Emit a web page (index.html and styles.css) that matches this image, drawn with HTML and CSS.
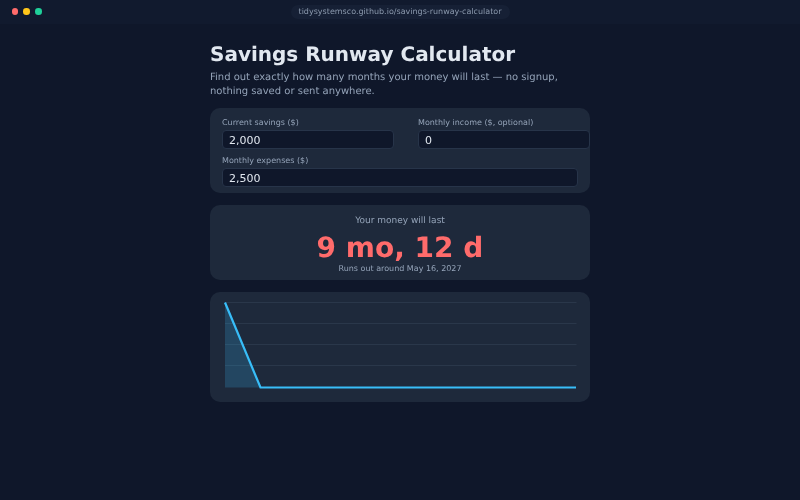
FILE: index.html
```html
<!DOCTYPE html>
<html lang="en">
<head>
<meta charset="utf-8">
<title>Savings Runway Calculator</title>
<link rel="stylesheet" href="styles.css">
</head>
<body>
<header class="chrome">
  <div class="lights"><span class="dot red"></span><span class="dot yellow"></span><span class="dot green"></span></div>
  <div class="url">tidysystemsco.github.io/savings-runway-calculator</div>
</header>
<main class="page">
  <h1 class="title">Savings Runway Calculator</h1>
  <p class="lead">Find out exactly how many months your money will last — no signup, nothing saved or sent anywhere.</p>
  <section class="card form">
    <div class="pair">
      <label class="field"><span class="label">Current savings ($)</span><input class="input" value="2,000"></label>
      <label class="field"><span class="label">Monthly income ($, optional)</span><input class="input" value="0"></label>
    </div>
    <label class="field"><span class="label">Monthly expenses ($)</span><input class="input" value="2,500"></label>
  </section>
  <section class="card result">
    <div class="result-label">Your money will last</div>
    <div class="result-value">9 mo, 12 d</div>
    <div class="result-date">Runs out around May 16, 2027</div>
  </section>
  <section class="card chart">
    <svg class="chart-svg" width="356" height="90" viewBox="0 0 356 90">
      <g class="grid-lines">
        <line x1="3" y1="2.5" x2="354.5" y2="2.5"/>
        <line x1="3" y1="23.5" x2="354.5" y2="23.5"/>
        <line x1="3" y1="44.5" x2="354.5" y2="44.5"/>
        <line x1="3" y1="65.5" x2="354.5" y2="65.5"/>
      </g>
      <polygon class="area" points="3,2.5 38.5,87.5 3,87.5"/>
      <polyline class="line" points="3,2.5 38.5,87.5 354,87.5"/>
    </svg>
  </section>
</main>
</body>
</html>
```
FILE: styles.css
```css
* { box-sizing: border-box; }
html, body { margin: 0; height: 100%; }
body {
  background: #0f172a;
  color: #e2e8f0;
  font-family: "DejaVu Sans", sans-serif;
  text-rendering: geometricPrecision;
  overflow: hidden;
}
.chrome {
  height: 24px;
  background: #111a2e;
  display: flex;
  align-items: center;
  justify-content: center;
  position: relative;
  filter: blur(0.3px);
}
.lights {
  position: absolute;
  left: 11.5px;
  top: 8px;
  display: flex;
  gap: 5.25px;
}
.dot { width: 6.5px; height: 6.5px; border-radius: 50%; }
.red { background: #ff6b6b; }
.yellow { background: #ffc61a; }
.green { background: #1fd09a; }
.url {
  font-size: 8px;
  line-height: 14px;
  height: 14px;
  padding: 0 8px;
  border-radius: 7px;
  background: #162035;
  color: #8b99ad;
}
.page {
  width: 380px;
  margin: 0 auto;
  padding-top: 18px;
  filter: blur(0.3px);
}
.title {
  margin: 0;
  font-size: 20px;
  line-height: 24px;
  font-weight: 700;
  color: #e2e8f0;
}
.lead {
  margin: 5px 0 0;
  font-size: 10px;
  line-height: 14px;
  color: #94a3b8;
}
.card {
  background: #1e293b;
  border-radius: 10px;
  margin-top: 12px;
}
.form {
  margin-top: 9.3px;
  padding: 7px 12px 6px;
  display: flex;
  flex-direction: column;
  gap: 4px;
  height: 85px;
}
.pair {
  display: grid;
  grid-template-columns: 172px 172px;
  gap: 24px;
}
.field { display: flex; flex-direction: column; }
.label {
  font-size: 8px;
  line-height: 15px;
  color: #94a3b8;
}
.input {
  width: 100%;
  height: 19px;
  padding: 1px 6px 0;
  border: 1px solid #273449;
  border-radius: 4px;
  background: #0f172a;
  color: #e2e8f0;
  font: 11px "DejaVu Sans", sans-serif;
}
.result {
  height: 75px;
  padding-top: 10px;
  text-align: center;
}
.result-label { font-size: 9px; line-height: 12px; color: #94a3b8; }
.result-value {
  font-size: 28px;
  line-height: 32px;
  font-weight: 700;
  color: #ff6b6b;
  margin-top: 5px;
}
.result-date { font-size: 8px; line-height: 10px; color: #94a3b8; }
.chart { height: 110px; padding: 8px 12px; }
.chart-svg { display: block; }
.grid-lines line { stroke: #334155; stroke-width: 0.6; }
.area { fill: #38bdf8; fill-opacity: 0.2; }
.line { fill: none; stroke: #38bdf8; stroke-width: 2.2; }
```
